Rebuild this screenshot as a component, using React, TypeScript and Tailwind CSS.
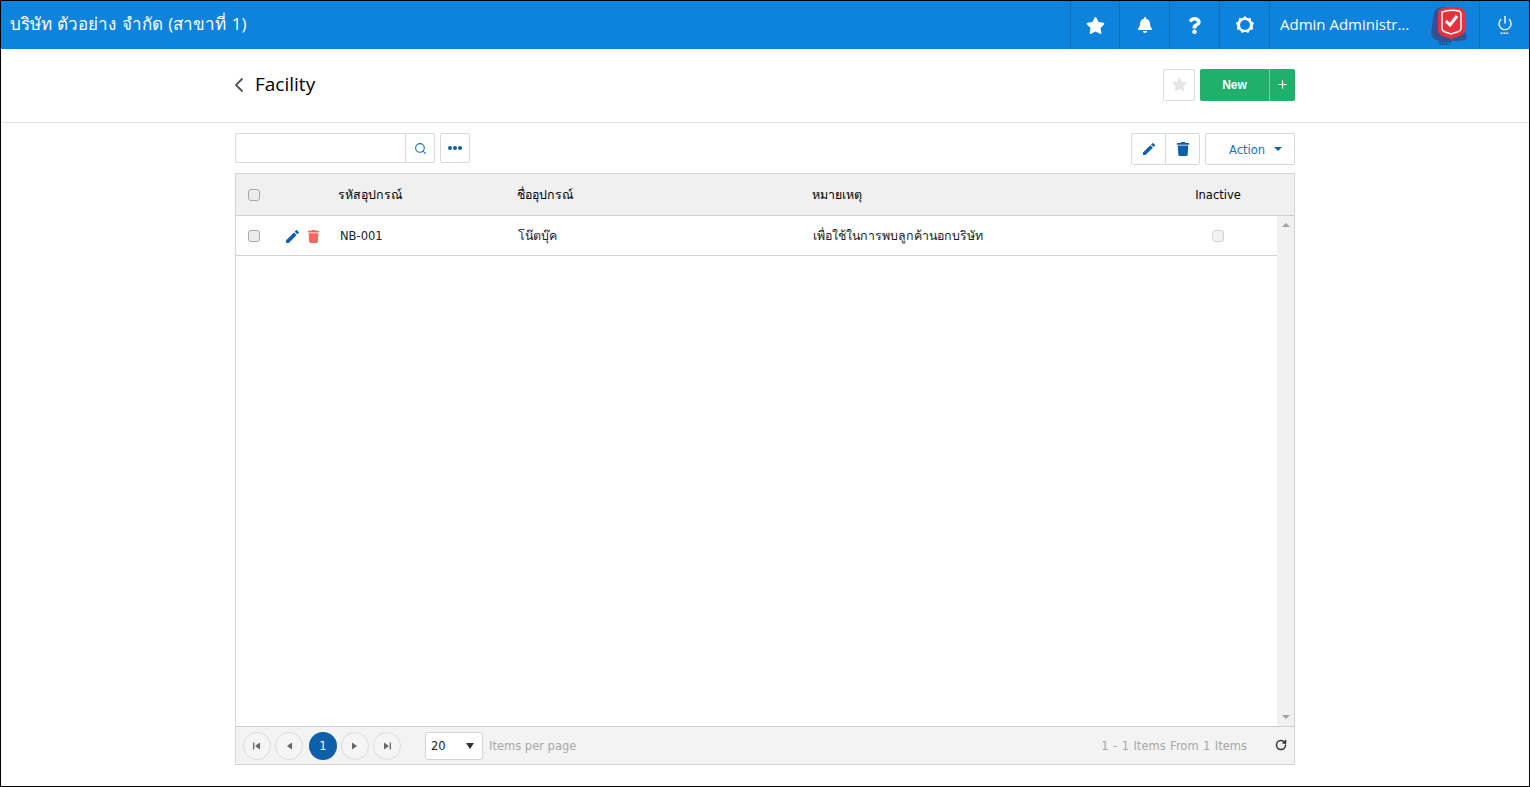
import { FaStar, FaBell, FaQuestion, FaTrash } from 'react-icons/fa'
import { MdEdit } from 'react-icons/md'
import { ChevronLeft, Search, Power, RotateCw, Plus } from 'lucide-react'

const UI_FONT = "font-['Open_Sans','Noto_Sans',sans-serif]"
const TABLE_FONT = "font-['DejaVu_Sans','Noto_Sans',sans-serif]"

function Gear() {
  return (
    <svg viewBox="0 0 20 20" className="w-[20px] h-[20px]">
      <path d="M10 1l2.4 2.3 3.3-.4.6 3.3 2.7 1.900L17.600 11l.6 3.200-3.200.9-1.800 2.800L10 16.700l-3.200 1.200-1.800-2.800-3.200-.9.6-3.200L.8 8.100l2.700-1.900.6-3.300 3.300.4z" fill="#fff" />
      <circle cx="10" cy="10" r="5" fill="#0d83dd" />
    </svg>
  )
}

function Logo() {
  return (
    <div className="relative w-[38px] h-[44px]">
      <svg viewBox="0 0 38 44" className="w-[38px] h-[44px]">
        <path d="M3 10 Q4 5 12 4 L24 4 L36 35 Q35 38 26 38 L9 38 Q1 37 0 30 Z" fill="#34528f" />
        <path d="M9 6 Q19 2 30 5 Q34 6 34 10 L34 27 Q34 31 28 33 L20 36 L12 33 Q7 31 7 27 L7 10 Q7 7 9 6Z" fill="#e6323c" />
        <path d="M11 9 Q19 6 28 8 Q30 9 30 11 L30 25 Q30 28 26 29 L20 31 L14 29 Q11 28 11 25Z" fill="none" stroke="#fff" strokeWidth="1.500" />
        <path d="M15 18l4 4 7-9" fill="none" stroke="#fff" strokeWidth="3" />
      </svg>
      <span className="absolute left-[8px] top-[37px] text-[5px] leading-[6px] font-bold text-[#25407a]">SOFT</span>
    </div>
  )
}

function Check({ muted }: { muted?: boolean }) {
  return (
    <span className={`block w-[12px] h-[12px] rounded-[3px] border ${muted ? 'border-[#d4d4d4] bg-[#f2f2f2]' : 'border-[#a8a8a8] bg-[#ececec]'}`} />
  )
}

function HeadIcon({ children }: { children: React.ReactNode }) {
  return <div className="w-[50px] h-full flex items-center justify-center border-l border-[#0b6fc0]">{children}</div>
}

function PageBtn({ children }: { children: React.ReactNode }) {
  return (
    <button className="w-[28px] h-[28px] rounded-full border border-[#dcdcdc] bg-[#f5f5f5] flex items-center justify-center">
      {children}
    </button>
  )
}

function Tri({ dir, bar }: { dir: 'l' | 'r'; bar?: boolean }) {
  return (
    <svg viewBox="0 0 8 8" className="w-[8px] h-[8px]" fill="#666">
      {dir === 'l' ? <path d="M7 .5v7L2 4z" /> : <path d="M1 .5v7L6 4z" />}
      {bar && (dir === 'l' ? <rect x="0" y="0.500" width="1.300" height="7" /> : <rect x="6.700" y="0.500" width="1.300" height="7" />)}
    </svg>
  )
}

export default function App() {
  return (
    <div className={`w-[1530px] h-[787px] border border-black bg-white flex flex-col overflow-hidden ${TABLE_FONT}`}>
      <header className={`h-[48px] bg-[#0d83dd] flex items-center text-white shrink-0 ${UI_FONT}`}>
        <div className="flex-1 pl-[9px] pb-[2px] text-[17px] [word-spacing:1px]">บริษัท ตัวอย่าง จำกัด (สาขาที่ 1)</div>
        <div className="w-[49px] h-full flex items-center justify-center border-l border-[#0b6fc0]"><FaStar className="text-[19px]" /></div>
        <HeadIcon><FaBell className="text-[16px]" /></HeadIcon>
        <HeadIcon><FaQuestion className="text-[17px]" /></HeadIcon>
        <HeadIcon><Gear /></HeadIcon>
        <div className="w-[210px] h-full border-l border-[#0b6fc0] pl-[10px] flex items-center justify-between pr-[10px]">
          <span className="text-[15px] pb-[1px] whitespace-nowrap">Admin Administr...</span>
          <Logo />
        </div>
        <div className="w-[50px] h-full border-l border-[#0b6fc0] flex flex-col items-center justify-center">
          <Power size={16} strokeWidth={2} />
          <span className="text-[6px] leading-[4px] tracking-[0.5px] font-bold">•••</span>
        </div>
      </header>

      <div className="h-[74px] border-b border-[#e4e4e4] shrink-0 pb-[2px]">
        <div className={`w-[1060px] mx-auto h-full flex items-center justify-between ${UI_FONT}`}>
          <div className="flex items-center gap-[4px]">
            <ChevronLeft size={24} strokeWidth={1.800} className="text-[#555] -ml-[8px]" />
            <span className="text-[19px] text-black">Facility</span>
          </div>
          <div className="flex items-center gap-[5px]">
            <button className="w-[32px] h-[32px] border border-[#dcdcdc] rounded-[2px] flex items-center justify-center">
              <FaStar className="text-[15px] text-[#e6e6e6]" />
            </button>
            <div className="flex h-[32px] rounded-[2px] bg-[#20b06b] text-white">
              <span className="w-[69px] pt-[1px] flex items-center justify-center text-[12px] font-bold font-['Liberation_Sans',sans-serif]">New</span>
              <span className="w-[26px] border-l border-[#6fd3a2] flex items-center justify-center"><Plus size={13} strokeWidth={2} /></span>
            </div>
          </div>
        </div>
      </div>

      <main className="w-[1060px] mx-auto flex-1 flex flex-col">
        <div className="h-[50px] pt-[10px] flex justify-between shrink-0">
          <div className="flex gap-[5px]">
            <div className="w-[200px] h-[30px] border border-[#d9d9d9] rounded-[2px] flex justify-end">
              <span className="w-[29px] border-l border-[#d9d9d9] flex items-center justify-center">
                <Search size={13} strokeWidth={2} className="text-[#1a6fb8]" />
              </span>
            </div>
            <button className="w-[30px] h-[30px] border border-[#d9d9d9] rounded-[2px] flex items-center justify-center gap-[1.500px]">
              <i className="w-[3.500px] h-[3.500px] rounded-full bg-[#0c5fa8]" />
              <i className="w-[3.500px] h-[3.500px] rounded-full bg-[#0c5fa8]" />
              <i className="w-[3.500px] h-[3.500px] rounded-full bg-[#0c5fa8]" />
            </button>
          </div>
          <div className="flex gap-[5px]">
            <div className="flex w-[69px] h-[32px] border border-[#d9d9d9] rounded-[2px]">
              <span className="w-[34px] flex items-center justify-center border-r border-[#d9d9d9]"><MdEdit className="text-[16px] text-[#0c5fa8]" /></span>
              <span className="flex-1 flex items-center justify-center"><FaTrash className="text-[14px] text-[#0c5fa8]" /></span>
            </div>
            <button className="w-[90px] h-[32px] border border-[#d9d9d9] rounded-[2px] flex items-center justify-end pr-[12px] gap-[9px] text-[11.500px] text-[#1a6fb8]">
              <span className="pt-[4px]">Action</span>
              <span className="w-0 h-0 border-x-[4px] border-x-transparent border-t-[4px] border-t-[#0c5fa8]" />
            </button>
          </div>
        </div>

        <div className="h-[592px] border border-[#d4d4d4] flex flex-col text-[11.500px] text-[#222]">
          <div className="h-[42px] bg-[#f0f0f0] border-b border-[#cfcfcf] flex items-center shrink-0 text-black">
            <div className="w-[36px] flex justify-center"><Check /></div>
            <div className="w-[67px]" />
            <div className="w-[178px] pt-[2px] -translate-x-px text-[12.400px]">รหัสอุปกรณ์</div>
            <div className="w-[295px] pt-[2px] text-[12.400px]">ชื่ออุปกรณ์</div>
            <div className="w-[347px] pt-[2px] text-[12.400px]">หมายเหตุ</div>
            <div className="w-[118px] pt-[2px] text-center">Inactive</div>
          </div>

          <div className="flex-1 flex min-h-0">
            <div className="flex-1">
              <div className="h-[40px] border-b border-[#d4d4d4] flex items-center">
                <div className="w-[36px] flex justify-center"><Check /></div>
                <div className="w-[67px] flex items-center pl-[12px] gap-[6px] pt-[1px]">
                  <MdEdit className="text-[17px] text-[#0c5fa8]" />
                  <FaTrash className="text-[13px] text-[#f9675c]" />
                </div>
                <div className="w-[178px] pl-[1px] pt-[2px]">NB-001</div>
                <div className="w-[295px] pl-[1px] pt-[2px] text-[12.400px]">โน๊ตบุ๊ค</div>
                <div className="w-[347px] pl-[1px] pt-[2px] text-[12.400px]">เพื่อใช้ในการพบลูกค้านอกบริษัท</div>
                <div className="flex-1 flex justify-center"><Check muted /></div>
              </div>
            </div>
            <div className="w-[17px] bg-[#f1f1f1] flex flex-col items-center justify-between py-[7px]">
              <span className="w-0 h-0 border-x-[4px] border-x-transparent border-b-[4px] border-b-[#a3a3a3]" />
              <span className="w-0 h-0 border-x-[4px] border-x-transparent border-t-[4px] border-t-[#a3a3a3]" />
            </div>
          </div>

          <div className="h-[38px] bg-[#f3f3f3] border-t border-[#cfcfcf] flex items-center pl-[7px] pr-[7px] shrink-0">
            <div className="flex items-center gap-[4px]">
              <PageBtn><Tri dir="l" bar /></PageBtn>
              <PageBtn><Tri dir="l" /></PageBtn>
              <span className="ml-[2px] w-[28px] h-[28px] rounded-full bg-[#0c5fa8] text-white flex items-center justify-center pt-[2px]">1</span>
              <PageBtn><Tri dir="r" /></PageBtn>
              <PageBtn><Tri dir="r" bar /></PageBtn>
            </div>
            <div className="ml-[24px] w-[58px] h-[28px] bg-white border border-[#d4d4d4] rounded-[3px] flex items-center justify-between pl-[5px] pr-[8px]">
              <span className="pt-[3px]">20</span>
              <span className="w-0 h-0 border-x-[4px] border-x-transparent border-t-[6px] border-t-[#333]" />
            </div>
            <span className="ml-[6px] pt-[3px] text-[#a8a8a8]">Items per page</span>
            <span className="ml-auto mr-[28px] pt-[3px] text-[#a8a8a8] [word-spacing:0.800px]">1 - 1 Items From 1 Items</span>
            <RotateCw size={12} strokeWidth={3} className="text-[#333] -translate-y-px" />
          </div>
        </div>
      </main>
    </div>
  )
}
